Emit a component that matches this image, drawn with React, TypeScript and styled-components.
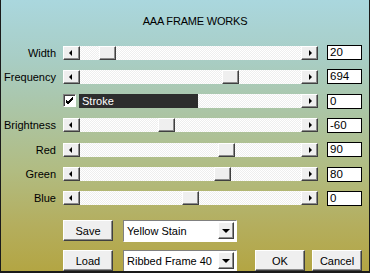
import React from 'react';
import styled, { createGlobalStyle, css } from 'styled-components';

const GlobalStyle = createGlobalStyle`
  html, body {
    margin: 0;
    padding: 0;
    overflow: hidden;
  }
  body {
    font-family: "Liberation Sans", Arial, sans-serif;
    font-size: 11px;
    color: #000;
  }
`;

const raised = css`
  background: #efefef;
  border-top: 1px solid #ffffff;
  border-left: 1px solid #ffffff;
  border-right: 1px solid #404040;
  border-bottom: 1px solid #404040;
  box-shadow: inset -1px -1px 0 #8c8c8c;
  box-sizing: border-box;
`;

const Window = styled.div`
  width: 370px;
  height: 273px;
  box-sizing: border-box;
  border-left: 1px solid #1a1a1a;
  border-right: 1px solid #1a1a1a;
  border-bottom: 2px solid #1a1a1a;
  overflow: hidden;
  background: linear-gradient(
    to bottom,
    #aad7de 0px,
    #a8cdc4 60px,
    #abc5a6 110px,
    #b1bc82 170px,
    #b4ae5e 225px,
    #b3a542 273px
  );
  display: flex;
  flex-direction: column;
`;

const Title = styled.div`
  height: 14px;
  margin-top: 14px;
  padding-left: 20px;
  text-align: center;
  line-height: 14px;
  letter-spacing: -0.2px;
`;

const Sliders = styled.div`
  margin-top: 17px;
  display: flex;
  flex-direction: column;
  gap: 10.33px;
`;

const Row = styled.div`
  display: grid;
  grid-template-columns: 55px 255px 35px;
  column-gap: 7px;
  align-items: center;
  height: 14px;
`;

const Value = styled.div`
  margin-left: 2px;
`;

const Label = styled.div`
  text-align: right;
  line-height: 14px;
  white-space: nowrap;
`;

const Bar = styled.div`
  display: flex;
  height: 14px;
`;

const ArrowButton = styled.div`
  ${raised};
  width: 17px;
  height: 14px;
  display: flex;
  align-items: center;
  justify-content: center;
  flex: none;
`;

const Arrow = styled.span<{ $dir: 'left' | 'right' | 'down' }>`
  width: 0;
  height: 0;
  ${(p) =>
    p.$dir === 'left'
      ? css`
          border-top: 3px solid transparent;
          border-bottom: 3px solid transparent;
          border-right: 3px solid #000;
          margin-right: 2px;
        `
      : p.$dir === 'right'
      ? css`
          border-top: 3px solid transparent;
          border-bottom: 3px solid transparent;
          border-left: 3px solid #000;
          margin-left: 1px;
        `
      : css`
          border-left: 4px solid transparent;
          border-right: 4px solid transparent;
          border-top: 4px solid #000;
          margin-top: 1px;
        `}
`;

const Track = styled.div`
  position: relative;
  flex: 1;
  height: 14px;
  background: repeating-conic-gradient(#eeeeee 0 25%, #ffffff 0 50%) 0 0 / 2px 2px;
`;

const Thumb = styled.div`
  ${raised};
  position: absolute;
  top: 0;
  width: 17px;
  height: 14px;
`;

const ValueBox = styled.div`
  width: 35px;
  height: 15px;
  box-sizing: border-box;
  border: 1px solid #000;
  background: #fff;
  padding-left: 2px;
  line-height: 13px;
  font-size: 11.5px;
`;

const CheckBox = styled.div`
  width: 13px;
  height: 13px;
  box-sizing: border-box;
  background: #fff;
  border-top: 1px solid #808080;
  border-left: 1px solid #808080;
  border-right: 1px solid #fff;
  border-bottom: 1px solid #fff;
  box-shadow: inset 1px 1px 0 #404040;
  display: flex;
  align-items: center;
  justify-content: center;
  flex: none;
  margin-right: 3px;
`;

const Stroke = styled.div`
  width: 119px;
  height: 14px;
  background: #2d2d2d;
  color: #fff;
  padding-left: 3px;
  box-sizing: border-box;
  line-height: 14px;
  flex: none;
`;

const Footer = styled.div`
  margin-top: 15px;
  padding-left: 62px;
  display: flex;
  flex-direction: column;
  gap: 8px;
`;

const FooterRow = styled.div`
  display: flex;
  align-items: center;
`;

const Button = styled.div<{ $gap?: number }>`
  ${raised};
  width: 50px;
  height: 21px;
  display: flex;
  align-items: center;
  justify-content: center;
  flex: none;
  margin-left: ${(p) => p.$gap ?? 0}px;
`;

const Combo = styled.div`
  width: 114px;
  height: 22px;
  margin-left: 10px;
  box-sizing: border-box;
  background: #fff;
  border-top: 1px solid #808080;
  border-left: 1px solid #808080;
  border-right: 1px solid #ffffff;
  border-bottom: 1px solid #ffffff;
  display: flex;
  align-items: center;
  padding: 1px 2px 1px 3px;
`;

const ComboText = styled.span`
  flex: 1;
  white-space: nowrap;
`;

const ComboButton = styled(ArrowButton)`
  width: 16px;
  height: 17px;
`;

type SliderProps = { label: string; value: string; thumb: number };

const Slider: React.FC<SliderProps> = ({ label, value, thumb }) => (
  <Row>
    <Label>{label}</Label>
    <Bar>
      <ArrowButton>
        <Arrow $dir="left" />
      </ArrowButton>
      <Track>
        <Thumb style={{ left: thumb - 80 }} />
      </Track>
      <ArrowButton>
        <Arrow $dir="right" />
      </ArrowButton>
    </Bar>
    <Value>
      <ValueBox>{value}</ValueBox>
    </Value>
  </Row>
);

const Check = () => (
  <svg width="9" height="9" viewBox="0 0 9 9">
    <path d="M1 4 L3 6 L8 1 M1 5 L3 7 L8 2 M1 6 L3 8 L8 3" stroke="#000" strokeWidth="1" fill="none" />
  </svg>
);

export default function App() {
  return (
    <>
      <GlobalStyle />
      <Window>
        <Title>AAA FRAME WORKS</Title>
        <Sliders>
          <Slider label="Width" value="20" thumb={99} />
          <Slider label="Frequency" value="694" thumb={222} />
          <Row>
            <span />
            <Bar>
              <CheckBox>
                <Check />
              </CheckBox>
              <Stroke>Stroke</Stroke>
              <Track />
              <ArrowButton>
                <Arrow $dir="right" />
              </ArrowButton>
            </Bar>
            <Value>
              <ValueBox>0</ValueBox>
            </Value>
          </Row>
          <Slider label="Brightness" value="-60" thumb={158} />
          <Slider label="Red" value="90" thumb={218} />
          <Slider label="Green" value="80" thumb={214} />
          <Slider label="Blue" value="0" thumb={182} />
        </Sliders>
        <Footer>
          <FooterRow>
            <Button>Save</Button>
            <Combo>
              <ComboText>Yellow Stain</ComboText>
              <ComboButton>
                <Arrow $dir="down" />
              </ComboButton>
            </Combo>
          </FooterRow>
          <FooterRow>
            <Button>Load</Button>
            <Combo>
              <ComboText>Ribbed Frame 40</ComboText>
              <ComboButton>
                <Arrow $dir="down" />
              </ComboButton>
            </Combo>
            <Button $gap={18}>OK</Button>
            <Button $gap={7}>Cancel</Button>
          </FooterRow>
        </Footer>
      </Window>
    </>
  );
}
